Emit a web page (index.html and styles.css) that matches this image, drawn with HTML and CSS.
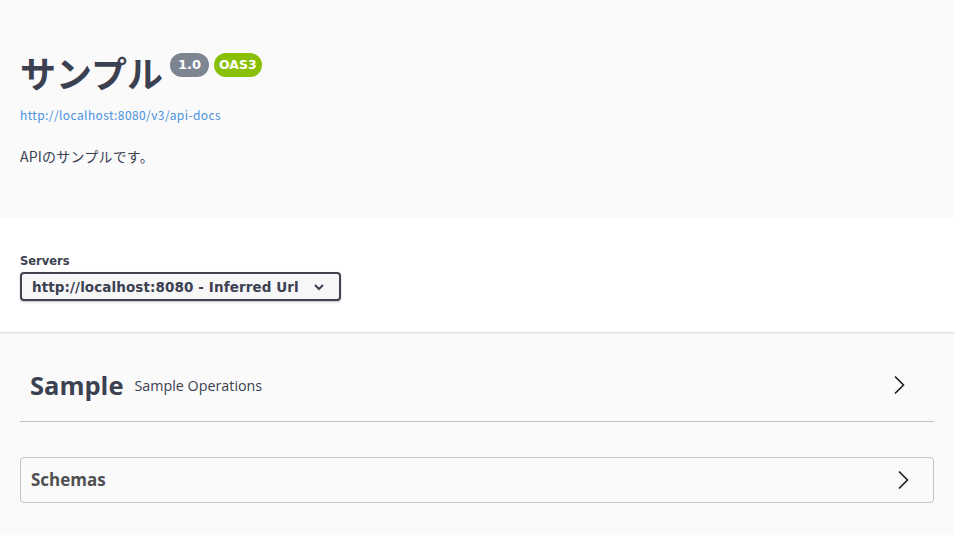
FILE: index.html
```html
<!DOCTYPE html>
<html lang="ja">
<head>
<meta charset="utf-8">
<title>Swagger UI</title>
<link rel="stylesheet" href="styles.css">
</head>
<body>
<div class="page">
  <section class="info">
    <div class="title-row">
      <h1 class="title">サンプル</h1>
      <span class="badge badge-version">1.0</span>
      <span class="badge badge-oas">OAS3</span>
    </div>
    <a class="spec-link" href="#">http://localhost:8080/v3/api-docs</a>
    <p class="desc">APIのサンプルです。</p>
  </section>
  <section class="servers">
    <div class="servers-label">Servers</div>
    <div class="select">
      <span class="select-text">http://localhost:8080 - Inferred Url</span>
      <svg class="select-arrow" width="12" height="8" viewBox="0 0 12 8"><path d="M2 2 L6 6 L10 2" fill="none" stroke="#3b4151" stroke-width="2"/></svg>
    </div>
  </section>
  <section class="main">
    <div class="tag">
      <div class="tag-title"><span class="tag-name">Sample</span><span class="tag-desc">Sample Operations</span></div>
      <svg class="chev" width="20" height="20" viewBox="0 0 20 20"><path d="M6 1.5 L14.5 10 L6 18.5" fill="none" stroke="#1a1a1a" stroke-width="1.6"/></svg>
    </div>
    <div class="schemas">
      <span class="schemas-title">Schemas</span>
      <svg class="chev" width="20" height="20" viewBox="0 0 20 20"><path d="M6 1.5 L14.5 10 L6 18.5" fill="none" stroke="#1a1a1a" stroke-width="1.6"/></svg>
    </div>
  </section>
</div>
</body>
</html>
```
FILE: styles.css
```css
html, body { margin: 0; padding: 0; }
body {
  background: #fafafa;
  font-family: "Open Sans", "Noto Sans CJK JP", sans-serif;
  color: #3b4151;
}
.page { width: 954px; }
.info {
  background: #fafafa;
  padding: 46px 20px 0;
  height: 218px;
  box-sizing: border-box;
}
.title-row { display: flex; align-items: flex-start; gap: 5px; }
.title {
  margin: 0;
  font-family: "Noto Sans CJK JP", sans-serif;
  font-size: 36px;
  font-weight: 700;
  line-height: 52px;
  color: #3b4151;
}
.badge {
  display: inline-block;
  margin-top: 7px;
  height: 24px;
  line-height: 24px;
  padding: 0 8px;
  border-radius: 12px;
  color: #fff;
  font-family: "DejaVu Sans", sans-serif;
  font-weight: 700;
  font-size: 13px;
}
.badge-version { background: #7d8492; margin-left: 2px; }
.badge-oas { background: #89bf04; padding: 0 5px; font-size: 12.5px; }
.spec-link {
  display: block;
  margin-top: 8px;
  font-family: "Noto Sans CJK JP", sans-serif;
  font-size: 12px;
  line-height: 18px;
  letter-spacing: 0.4px;
  color: #4990e2;
  text-decoration: none;
}
.desc {
  margin: 22px 0 0;
  font-family: "Noto Sans CJK JP", sans-serif;
  font-size: 14px;
  line-height: 20px;
  letter-spacing: 0.2px;
}
.servers {
  background: #fff;
  height: 114px;
  box-sizing: border-box;
  padding: 35px 20px 0;
  box-shadow: 0 1px 2px 0 rgba(0,0,0,.15);
  position: relative;
}
.servers-label {
  font-family: "DejaVu Sans", sans-serif;
  font-size: 11.5px;
  font-weight: 700;
  line-height: 16px;
  color: #3b4151;
  margin-bottom: 3px;
}
.select {
  width: 321px;
  height: 29px;
  box-sizing: border-box;
  border: 2px solid #41444e;
  border-radius: 4px;
  box-shadow: 0 1px 2px 0 rgba(0,0,0,.25);
  display: flex;
  align-items: center;
  padding: 0 0 0 10px;
  background: #f7f7f7;
}
.select-text {
  font-family: "DejaVu Sans", sans-serif;
  font-weight: 700;
  font-size: 13.5px;
  color: #3b4151;
  white-space: nowrap;
  letter-spacing: 0.1px;
}
.select-arrow { margin-left: auto; margin-right: 14px; }
.main { padding: 21px 20px 0; }
.tag {
  height: 63px;
  border-bottom: 1px solid rgba(59,65,81,.3);
  display: flex;
  align-items: center;
  padding: 0 25px 5px 10px;
  margin-bottom: 35px;
}
.tag-title { display: flex; align-items: center; }
.tag-name { font-size: 25.5px; font-weight: 700; }
.tag-desc { font-size: 14.3px; margin-left: 11px; padding-top: 2px; }
.tag .chev { margin-left: auto; }
.schemas {
  height: 46px;
  box-sizing: border-box;
  border: 1px solid rgba(59,65,81,.3);
  border-radius: 4px;
  display: flex;
  align-items: center;
  padding: 0 20px 1px 10px;
}
.schemas-title { font-size: 17px; font-weight: 700; color: #505050; }
.schemas .chev { margin-left: auto; }
```
